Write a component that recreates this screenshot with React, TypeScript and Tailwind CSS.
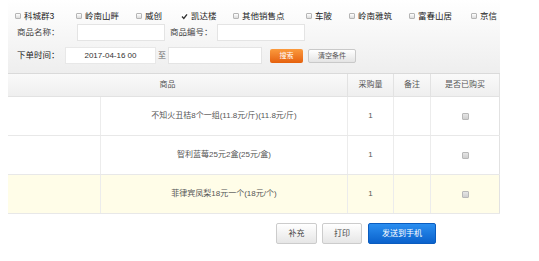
import React from "react";

const stores = [
  { name: "科城群3", checked: false, w: "w-[61px]" },
  { name: "岭南山畔", checked: false, w: "w-[60px]" },
  { name: "威创", checked: false, w: "w-[45px]" },
  { name: "凯达楼", checked: true, w: "w-[52px]" },
  { name: "其他销售点", checked: false, w: "w-[73px]" },
  { name: "车陂", checked: false, w: "w-[43px]" },
  { name: "岭南雅筑", checked: false, w: "w-[60px]" },
  { name: "富春山居", checked: false, w: "w-[62px]" },
  { name: "京信", checked: false, w: "w-[30px]" },
];

const rows = [
  { name: "不知火丑桔8个一组(11.8元/斤)(11.8元/斤)", qty: 1, hl: false },
  { name: "智利蓝莓25元2盒(25元/盒)", qty: 1, hl: false },
  { name: "菲律宾凤梨18元一个(18元/个)", qty: 1, hl: true },
];

function Box({ checked }: { checked: boolean }) {
  if (checked) {
    return (
      <span className="w-[7px] h-[7px] shrink-0 flex items-center justify-center bg-white">
        <svg width="7" height="7" viewBox="0 0 7 7">
          <path d="M1 3.6 L2.8 5.4 L6 1.4" fill="none" stroke="#333" strokeWidth="1.4" />
        </svg>
      </span>
    );
  }
  return <span className="w-[6px] h-[6px] shrink-0 border border-[#b5b5b5] bg-gradient-to-b from-white to-[#dcdcdc] rounded-[1px]" />;
}

export default function App() {
  return (
    <div
      className="w-[539px] h-[261px] bg-white text-[#333] overflow-hidden"
      style={{ fontFamily: '"Liberation Sans", "Noto Sans CJK SC", sans-serif' }}
    >
      <div className="ml-[8px] w-[492px]">
        {/* filter panel */}
        <div className="h-[74px] bg-gradient-to-b from-white to-[#eeeeee] border-b border-[#dadada] text-[8.5px] leading-none whitespace-nowrap">
          <div className="pt-[11px] pl-[7px] h-[21px] flex items-center">
            {stores.map((s) => (
              <label key={s.name} className={`${s.w} shrink-0 flex items-center gap-[3px] text-[#222]`}>
                <Box checked={s.checked} />
                <span>{s.name}</span>
              </label>
            ))}
          </div>
          <div className="mt-[3px] pl-[9px] flex items-center h-[17px]">
            <span className="w-[60px] shrink-0 text-[#444]">商品名称：</span>
            <span className="w-[88px] h-[17px] shrink-0 bg-white border border-[#e4e4e4]" />
            <span className="ml-[5px] w-[47px] shrink-0 text-[#444]">商品编号：</span>
            <span className="w-[88px] h-[17px] shrink-0 bg-white border border-[#e4e4e4]" />
          </div>
          <div className="mt-[6px] pl-[9px] flex items-center h-[17px]">
            <span className="w-[48px] shrink-0 text-[#222]">下单时间：</span>
            <span className="w-[91px] h-[17px] shrink-0 bg-white border border-[#e8e8e8] flex items-center justify-center text-[8px] text-[#333]">
              2017-04-16 00
            </span>
            <span className="ml-[2px] w-[10px] shrink-0 text-[8px] text-[#666]">至</span>
            <span className="w-[94px] h-[17px] shrink-0 bg-white border border-[#e4e4e4]" />
            <button className="ml-[8px] w-[33px] h-[14px] shrink-0 rounded-[2px] bg-gradient-to-b from-[#fb9a3c] to-[#e5600a] text-white text-[7px] leading-none flex items-center justify-center">
              搜索
            </button>
            <button className="ml-[5px] w-[48px] h-[14px] shrink-0 rounded-[2px] border border-[#c9c9c9] bg-gradient-to-b from-white to-[#e4e4e4] text-[#555] text-[7px] leading-none flex items-center justify-center">
              清空条件
            </button>
          </div>
        </div>

        {/* table */}
        <div className="text-[8px] leading-none text-[#555] whitespace-nowrap">
          <div className="h-[23px] flex bg-gradient-to-b from-[#fafafa] to-[#efefef] border-b border-[#e2e2e2]">
            <div className="w-[340px] flex items-center justify-center pr-[20px] border-r border-[#e2e2e2]">商品</div>
            <div className="w-[46px] flex items-center justify-center border-r border-[#e2e2e2]">采购量</div>
            <div className="w-[37px] flex items-center justify-center border-r border-[#e2e2e2]">备注</div>
            <div className="w-[69px] flex items-center justify-center border-r border-[#e2e2e2]">是否已购买</div>
          </div>
          {rows.map((r) => (
            <div
              key={r.name}
              className={`h-[39px] flex border-b border-[#e8e8e8] ${r.hl ? "bg-[#fffde8]" : "bg-white"}`}
            >
              <div className="w-[93px] border-r border-[#ececec]" />
              <div className="w-[247px] flex items-center justify-center border-r border-[#ececec]">{r.name}</div>
              <div className="w-[46px] flex items-center justify-center border-r border-[#ececec]">{r.qty}</div>
              <div className="w-[37px] border-r border-[#ececec]" />
              <div className="w-[69px] flex items-center justify-center border-r border-[#e2e2e2]">
                <span className="w-[7px] h-[7px] border border-[#b8b8b8] bg-gradient-to-b from-[#e6e6e6] to-[#cfcfcf] rounded-[1px]" />
              </div>
            </div>
          ))}
        </div>

        {/* actions */}
        <div className="mt-[9px] pl-[268px] flex items-center text-[8px] leading-none whitespace-nowrap">
          <button className="w-[41px] h-[21px] rounded-[2px] border border-[#cccccc] bg-gradient-to-b from-white to-[#e6e6e6] text-[#444] flex items-center justify-center">
            补充
          </button>
          <button className="ml-[5px] w-[40px] h-[21px] rounded-[2px] border border-[#cccccc] bg-gradient-to-b from-white to-[#e6e6e6] text-[#444] flex items-center justify-center">
            打印
          </button>
          <button className="ml-[6px] w-[68px] h-[21px] rounded-[2px] border border-[#0a5cbf] bg-gradient-to-b from-[#2a8ef0] to-[#0a62cc] text-white flex items-center justify-center">
            发送到手机
          </button>
        </div>
      </div>
    </div>
  );
}
